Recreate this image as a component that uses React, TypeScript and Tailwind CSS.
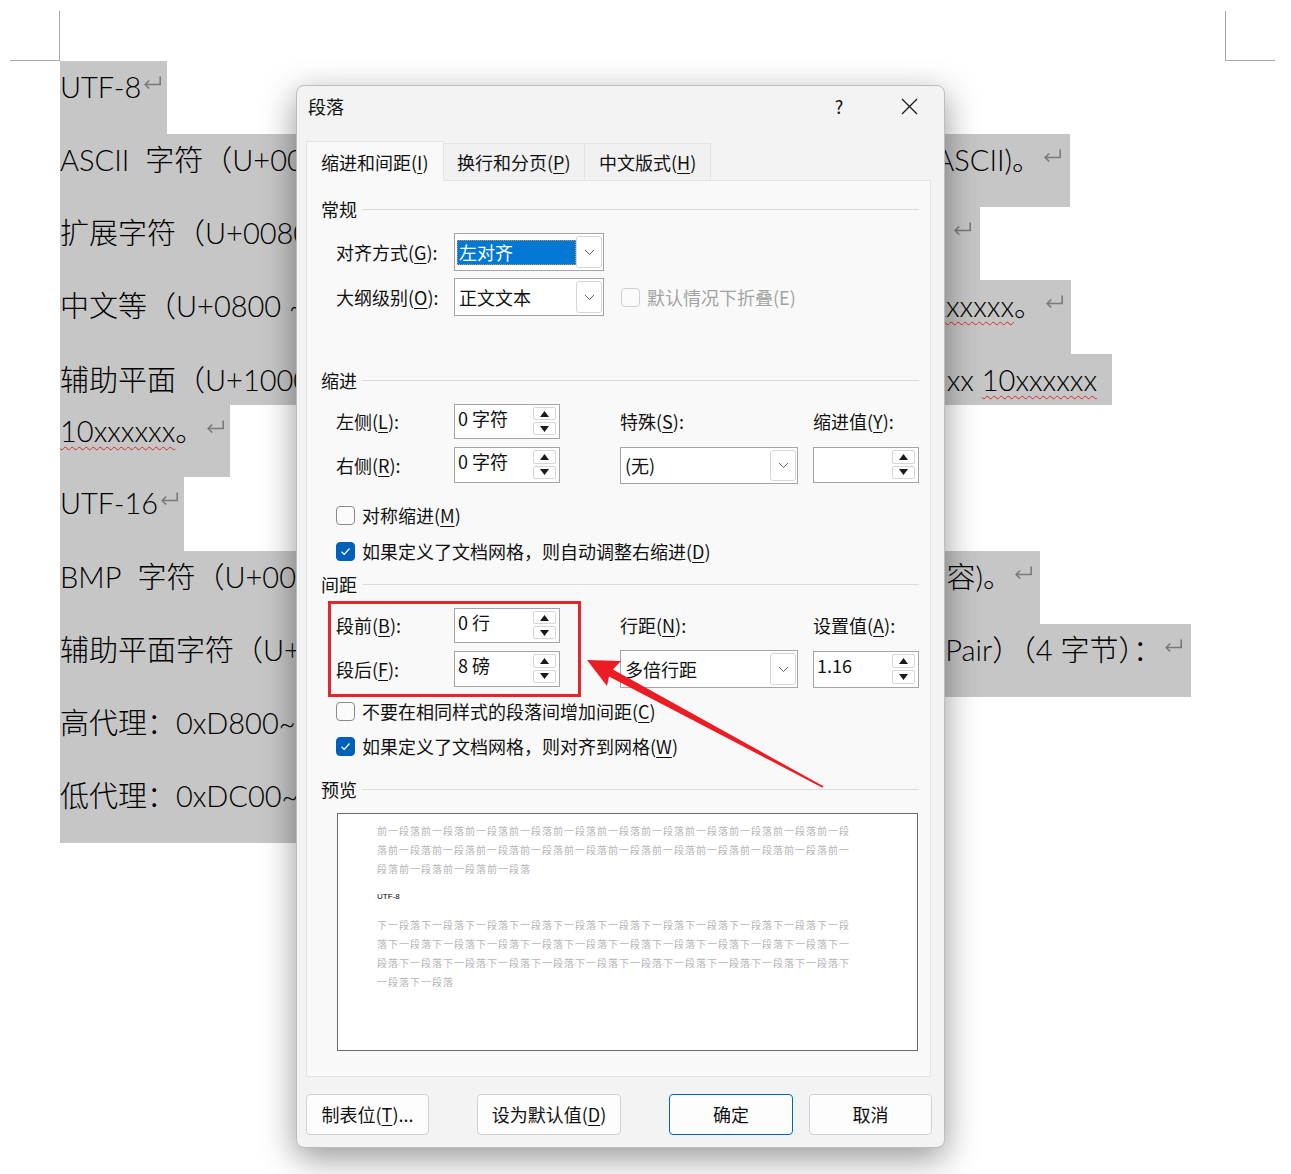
import React from "react";

// Word paragraph mark drawn after each paragraph
const Mark = () => (
  <svg width="19" height="13" viewBox="0 0 19 13" className="ml-[2px] inline-block align-[9px]" fill="none" stroke="#7a7a7a" strokeWidth="1.6">
    <path d="M17.2 0.5V8.5H2.2" />
    <path d="M6.2 4.5L2.2 8.5L6.2 12.5" />
  </svg>
);

const Squiggle = ({ children }: { children: React.ReactNode }) => (
  <span className="underline decoration-[#d42a2a] decoration-wavy decoration-1 underline-offset-[4px]">{children}</span>
);

const U = ({ children }: { children: React.ReactNode }) => (
  <span className="underline decoration-1 underline-offset-[3px]">{children}</span>
);

const Document = () => (
  <div className="font-['Lato','Noto_Sans_CJK_SC',sans-serif] text-[29px] font-light text-black">
    <div className="flex h-[61px] justify-between pt-[11px]">
      <div className="ml-[10px] h-[50px] w-[50px] border-b border-r border-[#a9a9a9]" />
      <div className="mr-[16px] h-[50px] w-[50px] border-b border-l border-[#a9a9a9]" />
    </div>
    <div className="flex flex-col items-start whitespace-nowrap pl-[60px] leading-[51px]">
      <div className="h-[73px] w-[107px] bg-[#c6c6c6]">
        UTF-8<Mark />
      </div>
      <div className="flex h-[73px] w-[1010px] bg-[#c6c6c6]">
        <span className="w-[236px] shrink-0 overflow-hidden">
          ASCII<span className="pl-[16px]">字符（U+0000 ~ U+007F）：1 字节</span>
        </span>
        <span className="ml-auto pr-[8px]">
          ASCII)。<Mark />
        </span>
      </div>
      <div className="flex h-[73px] w-[920px] bg-[#c6c6c6]">
        <span className="w-[236px] shrink-0 overflow-hidden">扩展字符（U+0080 ~ U+07FF）：2 字节</span>
        <span className="ml-auto pr-[8px]">
          <Mark />
        </span>
      </div>
      <div className="flex h-[74px] w-[1011px] bg-[#c6c6c6]">
        <span className="w-[236px] shrink-0 overflow-hidden">中文等（U+0800 ~ U+FFFF）：3 字节</span>
        <span className="ml-auto pr-[7px]">
          <Squiggle>xxxxxx</Squiggle>。<Mark />
        </span>
      </div>
      <div className="flex h-[51px] w-[1052px] bg-[#c6c6c6]">
        <span className="w-[236px] shrink-0 overflow-hidden">辅助平面（U+10000 ~ U+10FFFF）：4 字节</span>
        <span className="ml-auto pr-[15px]">
          xx <Squiggle>10xxxxxx</Squiggle>
        </span>
      </div>
      <div className="h-[72px] w-[170px] bg-[#c6c6c6]">
        <Squiggle>10xxxxxx</Squiggle>。<Mark />
      </div>
      <div className="h-[74px] w-[124px] bg-[#c6c6c6]">
        UTF-16<Mark />
      </div>
      <div className="flex h-[73px] w-[980px] bg-[#c6c6c6]">
        <span className="w-[236px] shrink-0 overflow-hidden">
          BMP<span className="pl-[16px]">字符（U+0000 ~ U+FFFF）：2 字节</span>
        </span>
        <span className="ml-auto pr-[7px]">
          容)。<Mark />
        </span>
      </div>
      <div className="flex h-[73px] w-[1131px] bg-[#c6c6c6]">
        <span className="w-[236px] shrink-0 overflow-hidden">辅助平面字符（U+10000 ~ U+10FFFF）</span>
        <span className="ml-auto pr-[8px]">
          Pair）（4 字节）：<Mark />
        </span>
      </div>
      <div className="h-[73px] w-[800px] bg-[#c6c6c6]">高代理：0xD800~0xDBFF</div>
      <div className="h-[73px] w-[800px] bg-[#c6c6c6]">低代理：0xDC00~0xDFFF</div>
    </div>
  </div>
);

const Chevron = () => (
  <svg width="11" height="7" viewBox="0 0 11 7" fill="none" stroke="#666666" strokeWidth="1">
    <path d="M1 1L5.5 5.5L10 1" />
  </svg>
);

const SpinBtn = ({ up }: { up?: boolean }) => (
  <span className="flex w-[23px] flex-1 items-center justify-center rounded-[2px] border border-[#d6d6d6] bg-white">
    <svg width="9" height="6" viewBox="0 0 9 6" fill="#1a1a1a">
      {up ? <path d="M4.5 0L9 6H0Z" /> : <path d="M0 0H9L4.5 6Z" />}
    </svg>
  </span>
);

const Spin = ({ className, value }: { className: string; value?: string }) => (
  <div className={"flex border border-[#a5a5a5] bg-white " + className}>
    <span className="flex-1 pl-[3px] leading-[27px]">{value}</span>
    <div className="flex flex-col gap-[2px] pb-[3px] pr-[3px] pt-[2px]">
      <SpinBtn up />
      <SpinBtn />
    </div>
  </div>
);

const Select = ({ className, value, focused }: { className: string; value: string; focused?: boolean }) => (
  <div className={"flex border border-[#a5a5a5] bg-white py-[2px] pr-[1px] " + className}>
    <div className="flex flex-1 items-center pl-[2px]">
      {focused ? (
        <span className="block h-[25px] w-full border border-dotted border-[#d99a4e] bg-[#0078d4] pl-px leading-[22px] text-white">
          {value}
        </span>
      ) : (
        <span className="pl-[2px]">{value}</span>
      )}
    </div>
    <div className="flex w-[26px] items-center justify-center rounded-[3px] border border-[#d7d7d7] bg-white">
      <Chevron />
    </div>
  </div>
);

const Check = ({ checked, disabled, children }: { checked?: boolean; disabled?: boolean; children: React.ReactNode }) => (
  <div className="flex h-[24px] items-center">
    <span
      className={
        "flex h-[19px] w-[19px] items-center justify-center rounded-[4px] border " +
        (checked ? "border-[#005fb8] bg-[#005fb8]" : disabled ? "border-[#d0d0d0] bg-[#fbfbfb]" : "border-[#8a8a8a] bg-[#fbfbfb]")
      }
    >
      {checked && (
        <svg width="11" height="9" viewBox="0 0 11 9" fill="none" stroke="#ffffff" strokeWidth="1.2">
          <path d="M1.5 4.8L4.2 7.3L9.5 1.5" />
        </svg>
      )}
    </span>
    <span className={"ml-[7px] leading-[24px] " + (disabled ? "text-[#a3a3a3]" : "")}>{children}</span>
  </div>
);

const Section = ({ title, className }: { title: string; className: string }) => (
  <div className={"flex h-[24px] items-center " + className}>
    <span className="leading-[24px]">{title}</span>
    <div className="ml-[5px] h-px flex-1 bg-[#dcdcdc]" />
  </div>
);

const Btn = ({ className, primary, children }: { className: string; primary?: boolean; children: React.ReactNode }) => (
  <div
    className={
      "flex h-[41px] items-center justify-center rounded-[4px] border bg-[#fdfdfd] " +
      (primary ? "border-[#0067c0] " : "border-[#d1d1d1] ") +
      className
    }
  >
    {children}
  </div>
);

const beforeLines = ["前一段落".repeat(10) + "前一段", "落" + "前一段落".repeat(10) + "前一", "段落" + "前一段落".repeat(3)];
const afterLines = [
  "下一段落".repeat(10) + "下一段",
  "落" + "下一段落".repeat(10) + "下一",
  "段落" + "下一段落".repeat(10) + "下",
  "一段落下一段落",
];

const ParagraphDialog = () => (
  <div className="absolute left-[296px] top-[85px] flex h-[1063px] w-[649px] flex-col rounded-[8px] border border-[#bdbdbd] bg-[#f3f3f3] font-['Noto_Sans_CJK_SC',sans-serif] text-[18px] text-[#111111] shadow-[0_10px_34px_rgba(0,0,0,0.42)]">
    {/* title bar */}
    <div className="flex h-[55px] items-start pl-[11px] pt-[7px]">
      <span className="leading-[26px]">段落</span>
      <span className="ml-auto w-[20px] text-center leading-[26px]">?</span>
      <span className="ml-[48px] mr-[23px] flex h-[26px] w-[24px] items-center justify-center">
        <svg width="17" height="17" viewBox="0 0 17 17" stroke="#1a1a1a" strokeWidth="1.3">
          <path d="M1 1L16 16M16 1L1 16" />
        </svg>
      </span>
    </div>

    {/* tabs */}
    <div className="flex h-[39px] items-start pl-[9px]">
      <div className="relative z-10 h-[40px] w-[138px] border border-b-0 border-[#e3e3e3] bg-[#f9f9f9] pl-[14px] pt-[7px] leading-[26px]">
        缩进和间距(<U>I</U>)
      </div>
      <div className="mt-[2px] h-[37px] w-[141px] border-r border-t border-[#e3e3e3] bg-[#f1f1f1] pl-[13px] pt-[5px] leading-[26px]">
        换行和分页(<U>P</U>)
      </div>
      <div className="mt-[2px] h-[37px] w-[126px] border-r border-t border-[#e3e3e3] bg-[#f1f1f1] pl-[14px] pt-[5px] leading-[26px]">
        中文版式(<U>H</U>)
      </div>
    </div>

    {/* tab page */}
    <div className="ml-[9px] flex h-[897px] w-[625px] flex-col border border-[#e3e3e3] bg-[#f9f9f9] pl-[14px] pr-[11px] pt-[16px]">
      <Section title="常规" className="" />
      <div className="mt-[12px] flex h-[38px] items-center pl-[15px]">
        <span className="w-[118px]">
          对齐方式(<U>G</U>):
        </span>
        <Select className="h-[38px] w-[150px]" value="左对齐" focused />
      </div>
      <div className="mt-[7px] flex h-[38px] items-center pl-[15px]">
        <span className="w-[118px]">
          大纲级别(<U>O</U>):
        </span>
        <Select className="h-[38px] w-[150px]" value="正文文本" />
        <div className="ml-[17px]">
          <Check disabled>默认情况下折叠(E)</Check>
        </div>
      </div>

      <Section title="缩进" className="mt-[52px]" />
      <div className="mt-[12px] flex h-[35px] items-center pl-[15px]">
        <span className="w-[118px]">
          左侧(<U>L</U>):
        </span>
        <Spin className="h-[35px] w-[106px]" value="0 字符" />
        <span className="ml-[60px] w-[178px]">
          特殊(<U>S</U>):
        </span>
        <span className="ml-[15px]">
          缩进值(<U>Y</U>):
        </span>
      </div>
      <div className="mt-[8px] flex h-[37px] items-start pl-[15px]">
        <span className="w-[118px] self-center">
          右侧(<U>R</U>):
        </span>
        <Spin className="h-[36px] w-[106px]" value="0 字符" />
        <Select className="ml-[60px] h-[37px] w-[178px]" value="(无)" />
        <Spin className="ml-[15px] h-[36px] w-[106px]" />
      </div>
      <div className="mt-[19px] pl-[15px]">
        <Check>
          对称缩进(<U>M</U>)
        </Check>
      </div>
      <div className="mt-[12px] pl-[15px]">
        <Check checked>
          如果定义了文档网格，则自动调整右缩进(<U>D</U>)
        </Check>
      </div>

      <Section title="间距" className="mt-[9px]" />
      <div className="mt-[12px] flex h-[35px] items-center pl-[15px]">
        <span className="w-[118px]">
          段前(<U>B</U>):
        </span>
        <Spin className="h-[35px] w-[106px]" value="0 行" />
        <span className="ml-[60px] w-[178px]">
          行距(<U>N</U>):
        </span>
        <span className="ml-[15px]">
          设置值(<U>A</U>):
        </span>
      </div>
      <div className="mt-[7px] flex h-[38px] items-center pl-[15px]">
        <span className="w-[118px]">
          段后(<U>F</U>):
        </span>
        <Spin className="h-[36px] w-[106px]" value="8 磅" />
        <Select className="ml-[60px] h-[38px] w-[178px]" value="多倍行距" />
        <Spin className="ml-[15px] h-[37px] w-[106px]" value="1.16" />
      </div>
      <div className="mt-[11px] pl-[15px]">
        <Check>
          不要在相同样式的段落间增加间距(<U>C</U>)
        </Check>
      </div>
      <div className="mt-[11px] pl-[15px]">
        <Check checked>
          如果定义了文档网格，则对齐到网格(<U>W</U>)
        </Check>
      </div>

      <Section title="预览" className="mt-[19px]" />
      <div className="ml-[16px] mt-[12px] h-[238px] w-[581px] whitespace-nowrap border border-[#6b6b6b] bg-white pl-[39px] pt-[7px] text-[10px] leading-[19px] tracking-[1px] text-[#b5b5b5]">
        {beforeLines.map((line, i) => (
          <div key={"b" + i}>{line}</div>
        ))}
        <div className="mt-[9px] font-['Liberation_Sans',sans-serif] text-[8px] tracking-normal text-black">UTF-8</div>
        <div className="mt-[9px]">
          {afterLines.map((line, i) => (
            <div key={"a" + i}>{line}</div>
          ))}
        </div>
      </div>
    </div>

    {/* dialog buttons */}
    <div className="mt-[17px] flex pl-[9px]">
      <Btn className="w-[123px]">
        制表位(<U>T</U>)...
      </Btn>
      <Btn className="ml-[48px] w-[144px]">
        设为默认值(<U>D</U>)
      </Btn>
      <Btn className="ml-[48px] w-[124px]" primary>
        确定
      </Btn>
      <Btn className="ml-[16px] w-[123px]">取消</Btn>
    </div>
  </div>
);

export default function App() {
  return (
    <div className="relative h-[1174px] w-full overflow-hidden bg-white">
      <Document />
      <ParagraphDialog />
      {/* red callout drawn on top of the dialog */}
      <svg className="pointer-events-none absolute left-0 top-0" width="1291" height="1174" viewBox="0 0 1291 1174">
        <rect x="329.5" y="602.5" width="250" height="93" fill="none" stroke="#e8242b" strokeWidth="3" />
        <polygon points="587,660 621,661 613,669.5 823.5,786.3 822.5,787.7 609,676.5 607,686" fill="#ec1c24" />
      </svg>
    </div>
  );
}
